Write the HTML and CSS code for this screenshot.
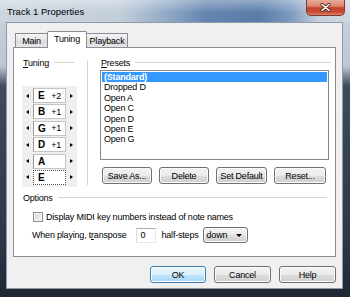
FILE: index.html
```html
<!DOCTYPE html>
<html lang="en">
<head>
  <meta charset="UTF-8">
  <title>Track 1 Properties</title>
  <link rel="stylesheet" href="styles.css">
</head>
<body>
  <div class="window">
    <div class="titlebar">
      <span class="title">Track 1 Properties</span>
      <button class="close" type="button" aria-label="Close">
        <svg width="11" height="9" viewBox="0 0 11 9">
          <path d="M2 1.5 L9 7.5 M9 1.5 L2 7.5" stroke="#4a2a24" stroke-width="3.2" stroke-linecap="round"/>
          <path d="M2 1.5 L9 7.5 M9 1.5 L2 7.5" stroke="#fff" stroke-width="1.6" stroke-linecap="round"/>
        </svg>
      </button>
    </div>

    <div class="client">
      <div class="tabs">
        <div class="tab tab-main">Main</div>
        <div class="tab tab-tuning active">Tuning</div>
        <div class="tab tab-playback">Playback</div>
      </div>

      <div class="panel">
        <div class="top">
          <div class="tuning">
            <div class="group-head"><span><u>T</u>uning</span><i class="rule"></i></div>
            <div class="strings">
              <div class="string"><span class="arr arr-left"></span><span class="note"><b>E</b><span>+2</span></span><span class="arr arr-right"></span></div>
              <div class="string"><span class="arr arr-left"></span><span class="note"><b>B</b><span>+1</span></span><span class="arr arr-right"></span></div>
              <div class="string"><span class="arr arr-left"></span><span class="note"><b>G</b><span>+1</span></span><span class="arr arr-right"></span></div>
              <div class="string"><span class="arr arr-left"></span><span class="note"><b>D</b><span>+1</span></span><span class="arr arr-right"></span></div>
              <div class="string"><span class="arr arr-left"></span><span class="note"><b>A</b><span></span></span><span class="arr arr-right"></span></div>
              <div class="string"><span class="arr arr-left"></span><span class="note focus"><b>E</b><span></span></span><span class="arr arr-right"></span></div>
            </div>
          </div>

          <div class="vsep"></div>

          <div class="presets">
            <div class="group-head"><span><u>P</u>resets</span><i class="rule"></i></div>
            <ul class="list">
              <li class="sel">(Standard)</li>
              <li>Dropped D</li>
              <li>Open A</li>
              <li>Open C</li>
              <li>Open D</li>
              <li>Open E</li>
              <li>Open G</li>
            </ul>
            <div class="preset-btns">
              <button class="btn w50" type="button">Save As...</button>
              <button class="btn w50" type="button">Delete</button>
              <button class="btn w51" type="button">Set Default</button>
              <button class="btn w52" type="button">Reset...</button>
            </div>
          </div>
        </div>

        <div class="group-head options-head"><span>Options</span><i class="rule"></i></div>

        <label class="check"><span class="box"></span>Display MIDI key numbers instead of note names</label>

        <div class="transpose">
          <span>When playing, t<u>r</u>anspose</span>
          <span class="num">0</span>
          <span class="steps">half-steps</span>
          <span class="btn combo">down<i class="caret"></i></span>
        </div>
      </div>

      <div class="footer">
        <button class="btn default w56" type="button">OK</button>
        <button class="btn w57" type="button">Cancel</button>
        <button class="btn w57" type="button">Help</button>
      </div>
    </div>
  </div>
</body>
</html>
```

FILE: styles.css
```css
/* reset */
* {
  box-sizing: border-box;
  margin: 0;
  padding: 0;
}

body {
  font-family: "Liberation Sans", Arial, sans-serif;
  font-size: 9px;
  letter-spacing: -0.2px;
  color: #000;
  background: #2b3646;
}

/* window frame */
.window {
  width: 350px;
  height: 297px;
  display: flex;
  flex-direction: column;
  padding: 0 7px 8px 6px;
  background: linear-gradient(to bottom, #cad3dd 0, #bcc7d3 66px, #3e4b5d 86px, #2c3747 240px, #1f2834 100%);
}

.titlebar {
  height: 22px;
  margin: 0 -7px 0 -6px;
  padding: 0 5px 0 7px;
  display: flex;
  align-items: flex-start;
  background:
    linear-gradient(to bottom, rgba(255,255,255,0.35), rgba(255,255,255,0) 60%),
    linear-gradient(90deg, #cdd6e0 0, #c3cedb 120px, #93abc8 165px, #6585af 205px, #587ba8 260px, #7e9cc0 292px, #c5d0dc 318px, #d0d8e2 100%);
}

.title {
  margin-top: 6px;
  font-size: 9.5px;
  letter-spacing: 0;
  line-height: 12px;
}

.close {
  margin-left: auto;
  width: 39px;
  height: 16px;
  border: 1px solid #7d3a2e;
  border-top: 0;
  border-radius: 0 0 5px 5px;
  background: linear-gradient(to bottom, #e9a898 0, #dc8672 40%, #c7442d 52%, #c84b33 80%, #dc8468 100%);
  display: flex;
  align-items: center;
  justify-content: center;
}

.client {
  flex: 1;
  display: flex;
  flex-direction: column;
  padding: 8px 6px 0 6px;
  background: #f0f0f0;
  border: 1px solid #8e9aa8;
}

/* tabs */
.tabs {
  display: flex;
  align-items: flex-end;
  height: 16px;
  margin-left: 2px;
  position: relative;
  z-index: 1;
}

.tab {
  height: 14px;
  line-height: 13px;
  padding-top: 1px;
  text-align: center;
  border: 1px solid #898c95;
  border-bottom: 0;
  background: linear-gradient(to bottom, #f5f5f5, #e4e4e4 50%, #dadada 51%, #e6e6e6);
}

.tab-main { width: 32px; border-right: 0; }
.tab-tuning { width: 40px; }
.tab-playback { width: 41px; border-left: 0; }

.tab.active {
  height: 17px;
  margin-bottom: -1px;
  background: #fff;
  border-radius: 2px 2px 0 0;
}

.panel {
  height: 210px;
  padding-top: 9px;
  background: #fff;
  border: 1px solid #898c95;
}

/* group headers */
.group-head {
  display: flex;
  align-items: center;
  height: 11px;
  padding-left: 1px;
}

.group-head .rule {
  flex: 1;
  height: 1px;
  margin-left: 5px;
  background: #d5d5d5;
}

.top {
  display: flex;
  height: 128px;
}

.tuning {
  width: 73px;
  padding-left: 8px;
}

.tuning .group-head {
  margin-right: 12px;
}

.strings {
  width: 55px;
  margin-top: 18px;
  padding: 2px 0;
  display: flex;
  flex-direction: column;
  gap: 1.4px;
  background: #efefef;
}

.string {
  display: flex;
  align-items: center;
  height: 15px;
}

.arr {
  width: 11px;
  height: 15px;
  display: flex;
  align-items: center;
  justify-content: center;
}

.arr::before {
  content: "";
  border-top: 2.5px solid transparent;
  border-bottom: 2.5px solid transparent;
}

.arr-left::before { border-right: 3px solid #000; }
.arr-right::before { border-left: 3px solid #000; }

.note {
  width: 33px;
  height: 15px;
  display: flex;
  align-items: center;
  justify-content: space-between;
  padding: 0 4px 0 4px;
  background: #fff;
  border: 1px solid #c4c4c4;
  border-left-color: #9a9a9a;
}

.note b {
  font-size: 10px;
}

.note.focus {
  border: 1px dotted #555;
}

.vsep {
  width: 1px;
  margin-top: 3px;
  background: #d5d5d5;
}

.presets {
  flex: 1;
  padding: 0 4px 0 12px;
}

.list {
  height: 90px;
  margin: 2px 2px 0 0;
  padding: 1px;
  list-style: none;
  background: #fff;
  border: 1px solid #828790;
}

.list li {
  height: 10.4px;
  line-height: 10.4px;
  padding-left: 2px;
}

.list li.sel {
  background: #3399ff;
  color: #fff;
  font-weight: bold;
}

.preset-btns {
  display: flex;
  gap: 7px;
  margin: 7px 0 0 2px;
}

/* buttons */
.btn {
  height: 17px;
  font: inherit;
  letter-spacing: inherit;
  color: #000;
  text-align: center;
  border: 1px solid #707070;
  border-radius: 3px;
  background: linear-gradient(to bottom, #f2f2f2 0, #ebebeb 50%, #dddddd 50%, #cfcfcf 100%);
  box-shadow: inset 0 0 0 1px #fbfbfb;
}

.btn.default {
  border-color: #3c7fb1;
  background: linear-gradient(to bottom, #eaf6fd 0, #d9f0fc 50%, #bee6fd 50%, #a7d9f5 100%);
}

.w50 { width: 50px; }
.w51 { width: 51px; }
.w52 { width: 52px; }
.w56 { width: 56px; }
.w57 { width: 57px; }

/* options */
.options-head {
  margin: 7px 8px 0 8px;
}

.check {
  display: flex;
  align-items: center;
  gap: 3px;
  height: 13px;
  margin: 7px 0 0 19px;
}

.check .box {
  width: 10px;
  height: 10px;
  border: 1px solid #8e8f8f;
  background: linear-gradient(135deg, #d6d6d6, #f7f7f7);
  box-shadow: inset 0 0 0 1px #f4f4f4;
}

.transpose {
  display: flex;
  align-items: center;
  height: 16px;
  margin: 4px 0 0 18px;
}

.num {
  width: 20px;
  height: 15px;
  margin-left: 9px;
  padding-left: 4px;
  line-height: 13px;
  background: #fff;
  border: 1px solid #e3e9ef;
  border-top-color: #abadb3;
  border-left-color: #dbdfe6;
}

.steps {
  margin-left: 6px;
}

.combo {
  width: 45px;
  height: 16px;
  margin-left: 4px;
  padding: 0 5px 0 3px;
  display: flex;
  align-items: center;
  justify-content: space-between;
}

.caret {
  border-left: 3px solid transparent;
  border-right: 3px solid transparent;
  border-top: 3px solid #000;
}

/* footer */
.footer {
  display: flex;
  justify-content: flex-end;
  gap: 8px;
  margin-top: 9px;
}
```
